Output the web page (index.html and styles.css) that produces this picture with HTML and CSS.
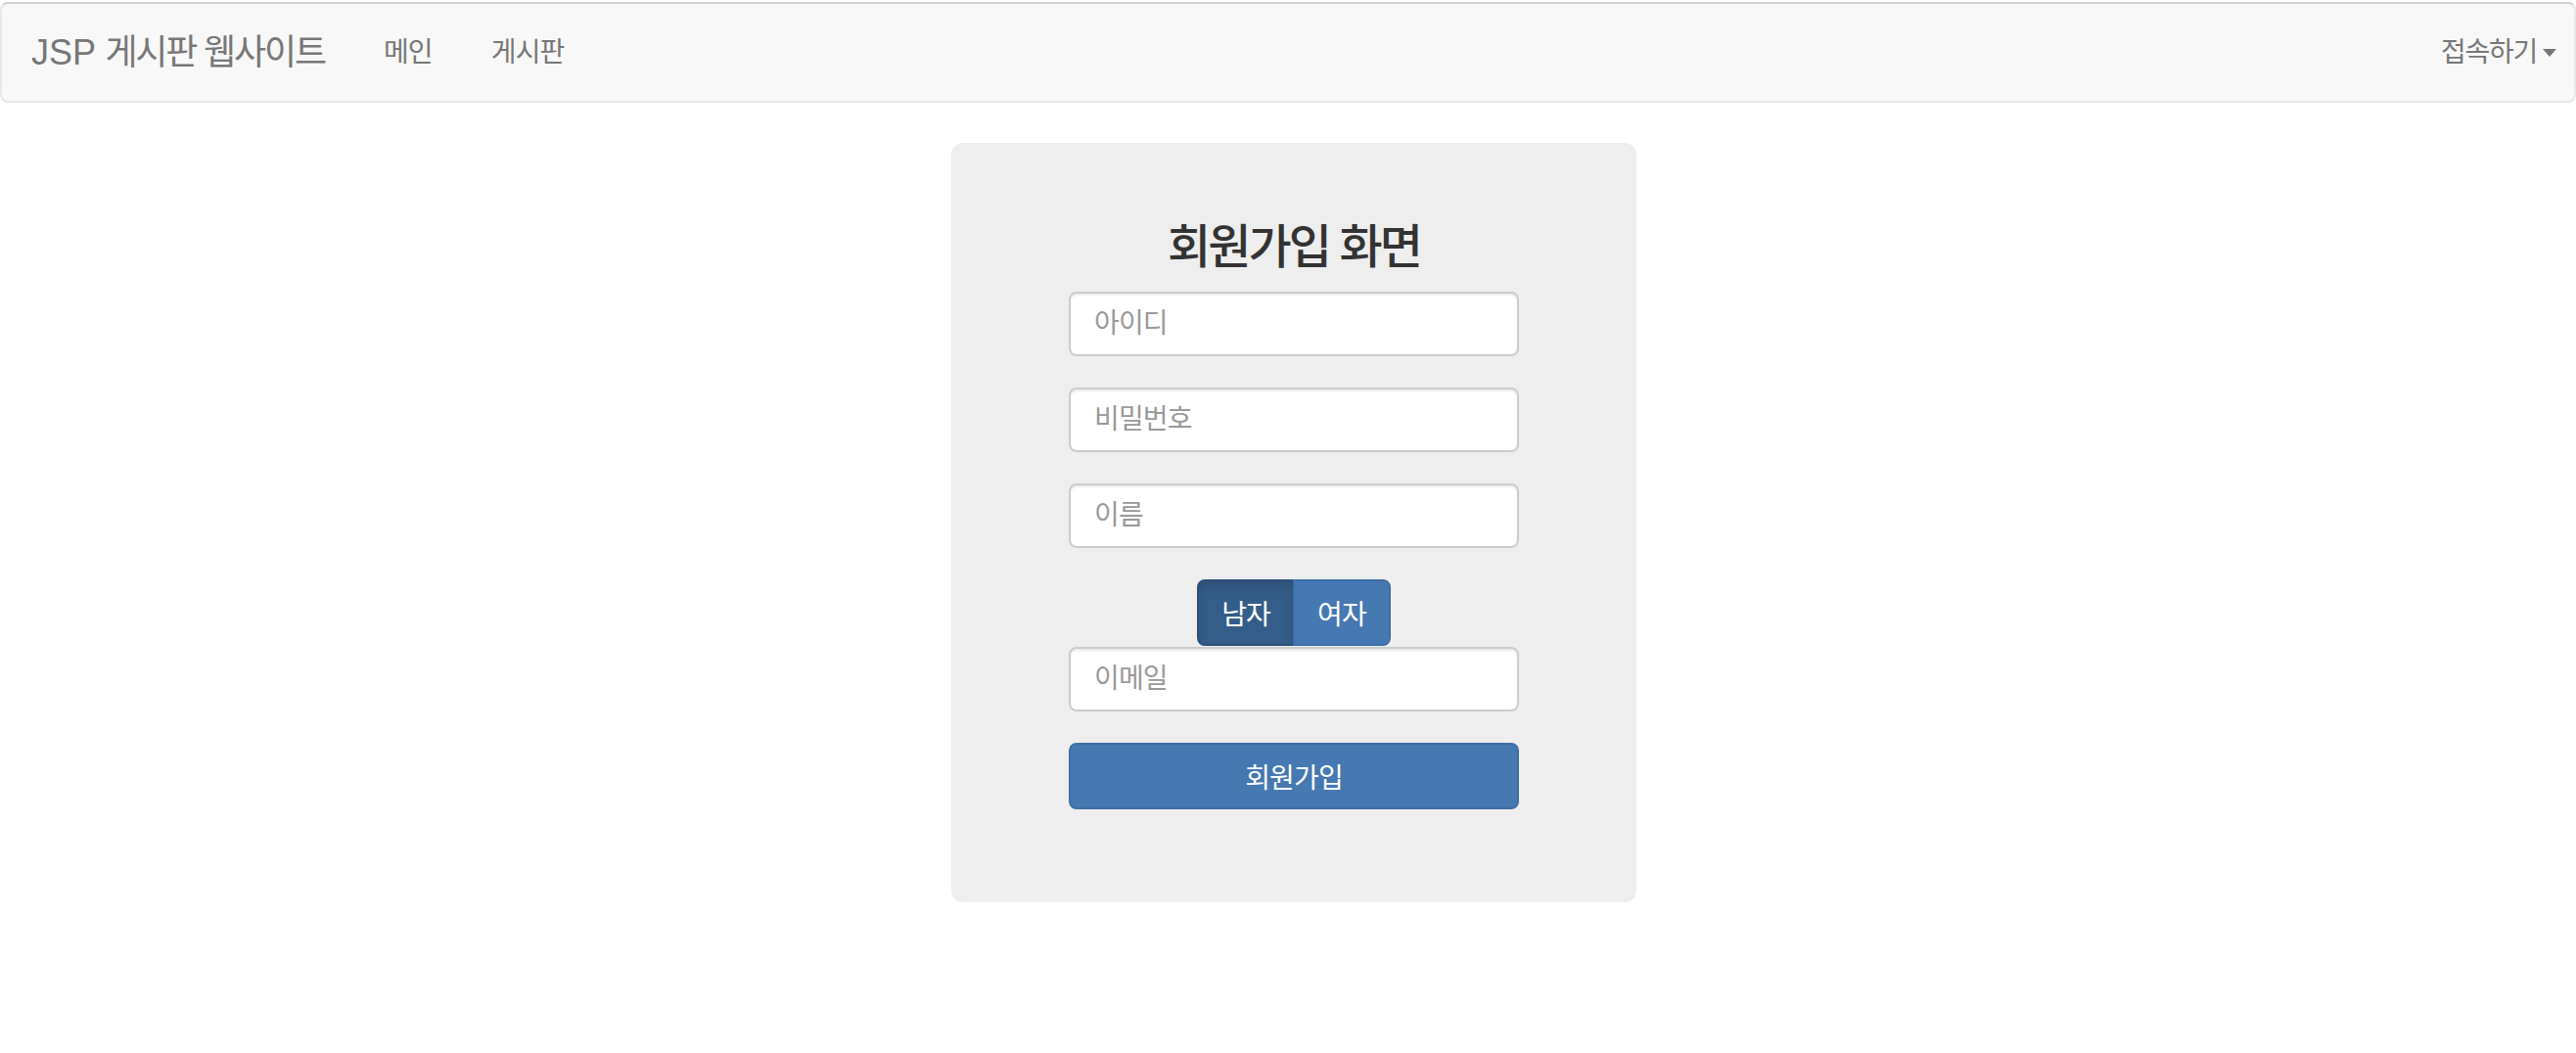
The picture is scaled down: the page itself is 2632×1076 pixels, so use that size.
FILE: index.html
```html
<!DOCTYPE html>
<html lang="ko">
<head>
<meta charset="utf-8">
<title>JSP 게시판 웹사이트</title>
<link rel="stylesheet" href="styles.css">
</head>
<body>
<nav class="navbar">
  <div class="nav-left">
    <a class="brand" href="#">JSP <span class="ko">게시판 웹사이트</span></a>
    <a class="nav-link ko" href="#">메인</a>
    <a class="nav-link ko" href="#">게시판</a>
  </div>
  <div class="nav-right">
    <a class="nav-link dropdown ko" href="#">접속하기<span class="caret"></span></a>
  </div>
</nav>
<main class="page">
  <section class="card">
    <h3 class="title ko">회원가입 화면</h3>
    <form class="form">
      <div class="form-group"><input class="field ko" type="text" placeholder="아이디"></div>
      <div class="form-group"><input class="field ko" type="password" placeholder="비밀번호"></div>
      <div class="form-group"><input class="field ko" type="text" placeholder="이름"></div>
      <div class="gender-row">
        <div class="btn-group">
          <button type="button" class="seg seg-active ko">남자</button>
          <button type="button" class="seg ko">여자</button>
        </div>
      </div>
      <div class="form-group"><input class="field ko" type="email" placeholder="이메일"></div>
      <button type="button" class="submit ko">회원가입</button>
    </form>
  </section>
</main>
</body>
</html>
```
FILE: styles.css
```css
* { box-sizing: border-box; }
html, body { margin: 0; padding: 0; background: #fff; }
body {
  font-family: "Liberation Sans", "Noto Sans CJK KR", sans-serif;
  color: #333;
}
.ko { letter-spacing: -0.03em; }

.navbar {
  margin-top: 2px;
  height: 103px;
  background: #f8f8f8;
  border: 2px solid #e7e7e7;
  border-top-color: #d2d2d2;
  border-radius: 8px;
  display: flex;
  justify-content: space-between;
  align-items: flex-start;
}
.nav-left, .nav-right { display: flex; align-items: flex-start; }
.brand {
  display: block;
  padding: 30px 30px;
  font-size: 36px;
  line-height: 40px;
  color: #777;
  text-decoration: none;
}
.brand .ko { letter-spacing: -0.06em; }
.nav-link {
  display: block;
  padding: 30px 30px;
  font-size: 28px;
  line-height: 40px;
  color: #777;
  text-decoration: none;
}
.nav-left .nav-link:first-of-type { margin-left: 18px; }
.dropdown { padding-right: 18px; display: flex; align-items: center; letter-spacing: -0.045em; }
.caret {
  display: inline-block;
  width: 0; height: 0;
  margin-left: 6px;
  border-top: 8px solid #777;
  border-left: 7px solid transparent;
  border-right: 7px solid transparent;
}

.page { padding-top: 41px; }
.card {
  width: 700px;
  margin-left: calc(50% - 344px);
  background: #eee;
  border-radius: 12px;
  padding: 80px 120px 95px;
}
.title {
  margin: 0 0 19px;
  text-align: center;
  font-size: 48px;
  line-height: 53px;
  font-weight: 500;
  color: #333;
  letter-spacing: -0.06em;
}
.form { margin: 0; }
.form-group { margin-bottom: 32px; }
.field {
  display: block;
  width: 100%;
  height: 66px;
  padding: 0 24px;
  font-family: inherit;
  font-size: 28px;
  color: #555;
  background: #fff;
  border: 2px solid #ccc;
  border-radius: 8px;
  box-shadow: inset 0 2px 2px rgba(0,0,0,.075);
  outline: none;
}
.field::placeholder { color: #999; opacity: 1; }

.gender-row { display: flex; justify-content: center; margin-bottom: 1px; }
.btn-group { display: flex; }
.seg {
  height: 68px;
  padding: 0 23px;
  font-family: inherit;
  font-size: 28px;
  color: #fff;
  background: #4678b1;
  border: 2px solid #3d6ea6;
  cursor: pointer;
}
.seg:first-child { border-radius: 8px 0 0 8px; }
.seg:last-child { border-radius: 0 8px 8px 0; margin-left: -2px; }
.seg-active {
  background: #355d89;
  border-color: #2b4f78;
  box-shadow: inset 0 6px 10px rgba(0,0,0,.125);
}
.submit {
  display: block;
  width: 100%;
  height: 68px;
  font-family: inherit;
  font-size: 28px;
  color: #fff;
  background: #4678b1;
  border: 2px solid #3d6ea6;
  border-radius: 8px;
  cursor: pointer;
}
```
